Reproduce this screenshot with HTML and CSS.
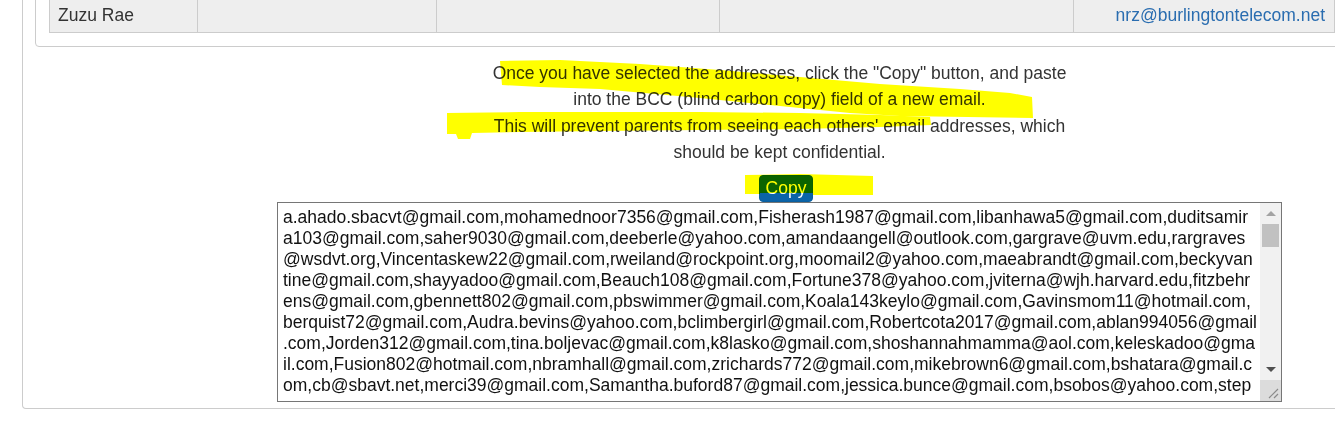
FILE: index.html
```html
<!DOCTYPE html>
<html lang="en">
<head>
<meta charset="utf-8">
<title>Parent emails</title>
<link rel="stylesheet" href="styles.css">
</head>
<body>
<div class="page">
  <div class="outer">
    <div class="inner">
      <table class="roster">
        <colgroup>
          <col class="c1"><col class="c2"><col class="c3"><col class="c4"><col class="c5">
        </colgroup>
        <tr>
          <td>Zuzu Rae</td>
          <td></td>
          <td></td>
          <td></td>
          <td class="email"><a href="#">nrz@burlingtontelecom.net</a></td>
        </tr>
      </table>
    </div>
    <div class="bcc">
      <p class="note">Once you have selected the addresses, click the "Copy" button, and paste<br>into the BCC (blind carbon copy) field of a new email.<br>This will prevent parents from seeing each others' email addresses, which<br>should be kept confidential.</p>
      <div class="copy-row"><button class="btn-copy" type="button">Copy</button></div>
      <div class="ta-wrap">
<textarea class="emails" readonly>a.ahado.sbacvt@gmail.com,mohamednoor7356@gmail.com,Fisherash1987@gmail.com,libanhawa5@gmail.com,duditsamir
a103@gmail.com,saher9030@gmail.com,deeberle@yahoo.com,amandaangell@outlook.com,gargrave@uvm.edu,rargraves
@wsdvt.org,Vincentaskew22@gmail.com,rweiland@rockpoint.org,moomail2@yahoo.com,maeabrandt@gmail.com,beckyvan
tine@gmail.com,shayyadoo@gmail.com,Beauch108@gmail.com,Fortune378@yahoo.com,jviterna@wjh.harvard.edu,fitzbehr
ens@gmail.com,gbennett802@gmail.com,pbswimmer@gmail.com,Koala143keylo@gmail.com,Gavinsmom11@hotmail.com,
berquist72@gmail.com,Audra.bevins@yahoo.com,bclimbergirl@gmail.com,Robertcota2017@gmail.com,ablan994056@gmail
.com,Jorden312@gmail.com,tina.boljevac@gmail.com,k8lasko@gmail.com,shoshannahmamma@aol.com,keleskadoo@gma
il.com,Fusion802@hotmail.com,nbramhall@gmail.com,zrichards772@gmail.com,mikebrown6@gmail.com,bshatara@gmail.c
om,cb@sbavt.net,merci39@gmail.com,Samantha.buford87@gmail.com,jessica.bunce@gmail.com,bsobos@yahoo.com,step</textarea>
        <div class="sb" aria-hidden="true">
          <div class="sb-btn sb-up"><span class="tri tri-up"></span></div>
          <div class="sb-track"><div class="sb-thumb"></div></div>
          <div class="sb-btn sb-down"><span class="tri tri-down"></span></div>
          <div class="sb-corner">
            <svg width="21" height="21" viewBox="0 0 21 21"><path d="M18 9 L9 18 M18 14 L14 18" stroke="#8a8a8a" stroke-width="1.2" fill="none"/></svg>
          </div>
        </div>
      </div>
    </div>
  </div>
  <svg class="marker" width="1335" height="435" viewBox="0 0 1335 435" aria-hidden="true">
    <polygon points="500,61 560,60 640,64 720,70 800,77 880,84 960,89 1010,93 1032,97 1033,118 900,116 850,113 780,106 700,98 600,89 540,87 502,85"/>
    <polygon points="447,113 520,112 600,112 700,112 800,113 880,115 930,117 931,125 880,127 800,129 700,130 600,131 520,132 472,133 470,139 458,139 456,134 447,134"/>
    <polygon points="745,175 800,174 873,176 873,195 813,195 813,193 760,193 760,194 745,194"/>
  </svg>
</div>
</body>
</html>
```
FILE: styles.css
```css
html, body {
  margin: 0;
  padding: 0;
  background: #fff;
  overflow: hidden;
}

body {
  font-family: "Liberation Sans", Arial, sans-serif;
  color: #333;
}

.page {
  position: relative;
  width: 1335px;
  height: 435px;
  overflow: hidden;
}

.outer {
  margin-left: 22px;
  width: 1340px;
  border: 1px solid #cccccc;
  border-top: 0;
  border-radius: 0 0 4px 4px;
  padding-bottom: 6px;
}

.inner {
  margin: -6px 0 0 12px;
  width: 1285px;
  border: 1px solid #cccccc;
  border-radius: 4px;
  padding: 0 13px 13px;
}

.roster {
  width: 1285px;
  table-layout: fixed;
  border-collapse: collapse;
  font-size: 17.5px;
  line-height: 25px;
}

.roster .c1 { width: 148px; }
.roster .c2 { width: 239px; }
.roster .c3 { width: 283px; }
.roster .c4 { width: 354px; }
.roster .c5 { width: 261px; }

.roster td {
  background: #eeeeee;
  border: 1px solid #cccccc;
  padding: 7px 8px 4px;
  color: #333;
  white-space: nowrap;
}

.roster td.email {
  text-align: right;
  padding-right: 9px;
}

.roster a {
  color: #2a6db0;
  text-decoration: none;
}

.bcc {
  margin-left: 254px;
  width: 1005px;
}

.note {
  margin: 13px 0 0;
  text-align: center;
  font-size: 17.5px;
  line-height: 26.25px;
  color: #333;
}

.copy-row {
  margin-top: 10px;
  height: 27px;
  text-align: center;
}

.btn-copy {
  margin-left: 13px;
  height: 27px;
  box-sizing: border-box;
  padding: 2px 6px;
  border: 1px solid #0a5f9f;
  border-radius: 4px;
  background: #0b64a8;
  color: #fff;
  font-family: "Liberation Sans", Arial, sans-serif;
  font-size: 17.5px;
  line-height: 21px;
  vertical-align: top;
}

.ta-wrap {
  position: relative;
  width: 1005px;
  height: 200px;
}

.emails {
  display: block;
  box-sizing: border-box;
  width: 1005px;
  height: 200px;
  margin: 0;
  border: 1px solid #767676;
  padding: 4px 5px;
  font-family: "Liberation Sans", Arial, sans-serif;
  font-size: 17.5px;
  line-height: 21px;
  color: #111;
  background: #fff;
  white-space: pre;
  overflow: hidden;
  resize: none;
  outline: none;
}

.sb {
  position: absolute;
  top: 1px;
  right: 1px;
  bottom: 1px;
  width: 21px;
  display: flex;
  flex-direction: column;
  background: #f1f1f1;
}

.sb-btn {
  height: 21px;
  flex: none;
  display: flex;
  align-items: center;
  justify-content: center;
}

.sb-track {
  flex: 1;
  position: relative;
}

.sb-thumb {
  position: absolute;
  top: 0;
  left: 2px;
  right: 2px;
  height: 23px;
  background: #c1c1c1;
}

.tri {
  width: 0;
  height: 0;
  border-left: 5px solid transparent;
  border-right: 5px solid transparent;
}

.tri-up {
  border-bottom: 5px solid #a3a3a3;
}

.tri-down {
  border-top: 5px solid #505050;
}

.sb-corner {
  height: 21px;
  flex: none;
  background: #dcdcdc;
}

.sb-corner svg {
  display: block;
}

.marker {
  position: absolute;
  top: 0;
  left: 0;
  pointer-events: none;
  mix-blend-mode: multiply;
  fill: #ffff00;
}
```
